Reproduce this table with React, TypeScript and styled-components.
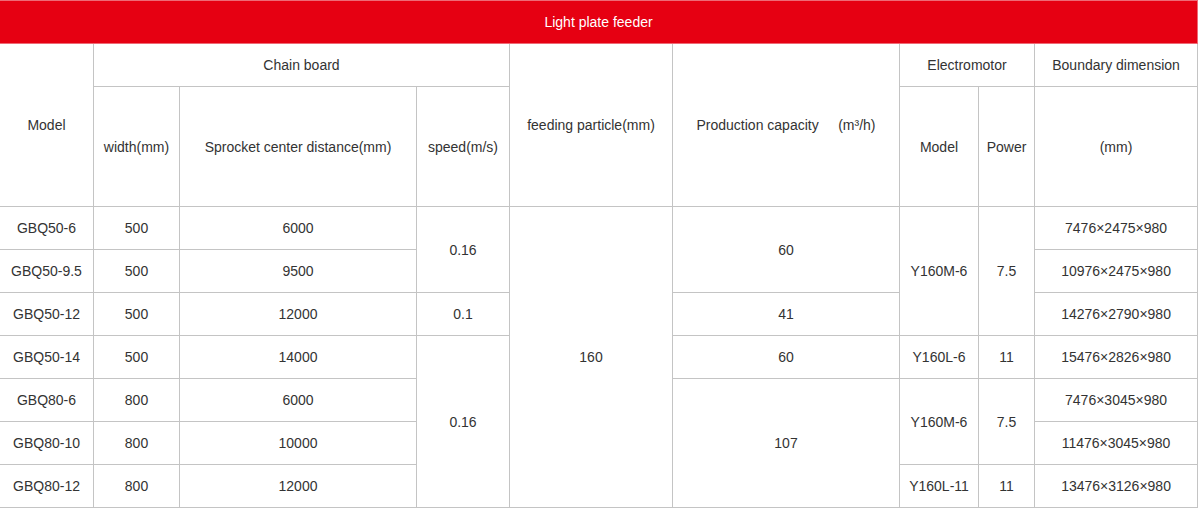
import React from 'react';
import styled, { createGlobalStyle } from 'styled-components';

const GlobalStyle = createGlobalStyle`
  html, body {
    margin: 0;
    padding: 0;
    background: #ffffff;
  }
  body {
    font-family: "Liberation Sans", Arial, sans-serif;
  }
`

const Frame = styled.div`
  width: 1199px;
  height: 509px;
  overflow: hidden;
`

const Table = styled.table`
  margin-left: -1px;
  width: 1198px;
  border-collapse: collapse;
  table-layout: fixed;
  font-size: 14px;
  color: #333333;
`

const TitleCell = styled.td`
  height: 42px;
  padding: 0;
  background: #e60012;
  color: #ffffff;
  text-align: center;
  border: 1px solid #ee6a76;
`

const Cell = styled.td`
  padding: 0;
  text-align: center;
  vertical-align: middle;
  border: 1px solid #c4c4c4;
  white-space: nowrap;
`

const Row = styled.tr<{ $h: number }>`
  height: ${p => p.$h}px;
`

const widths = [94, 86, 237, 93, 163, 227, 79, 56, 163]

const gap = '\u00a0\u00a0\u00a0\u00a0\u00a0'

const App: React.FC = () => {
  return (
    <Frame>
      <GlobalStyle />
      <Table>
        <colgroup>
          { widths.map((w, i) => <col key={ i } style={{ width: w }} />) }
        </colgroup>
        <tbody>
          <Row $h={ 42 }>
            <TitleCell colSpan={ 9 }>Light plate feeder</TitleCell>
          </Row>
          <Row $h={ 43 }>
            <Cell rowSpan={ 2 }>Model</Cell>
            <Cell colSpan={ 3 }>Chain board</Cell>
            <Cell rowSpan={ 2 }>feeding particle(mm)</Cell>
            <Cell rowSpan={ 2 }>Production capacity{ gap }(m³/h)</Cell>
            <Cell colSpan={ 2 }>Electromotor</Cell>
            <Cell>Boundary dimension</Cell>
          </Row>
          <Row $h={ 120 }>
            <Cell>width(mm)</Cell>
            <Cell>Sprocket center distance(mm)</Cell>
            <Cell>speed(m/s)</Cell>
            <Cell>Model</Cell>
            <Cell>Power</Cell>
            <Cell>(mm)</Cell>
          </Row>
          <Row $h={ 43 }>
            <Cell>GBQ50-6</Cell>
            <Cell>500</Cell>
            <Cell>6000</Cell>
            <Cell rowSpan={ 2 }>0.16</Cell>
            <Cell rowSpan={ 7 }>160</Cell>
            <Cell rowSpan={ 2 }>60</Cell>
            <Cell rowSpan={ 3 }>Y160M-6</Cell>
            <Cell rowSpan={ 3 }>7.5</Cell>
            <Cell>7476×2475×980</Cell>
          </Row>
          <Row $h={ 43 }>
            <Cell>GBQ50-9.5</Cell>
            <Cell>500</Cell>
            <Cell>9500</Cell>
            <Cell>10976×2475×980</Cell>
          </Row>
          <Row $h={ 43 }>
            <Cell>GBQ50-12</Cell>
            <Cell>500</Cell>
            <Cell>12000</Cell>
            <Cell>0.1</Cell>
            <Cell>41</Cell>
            <Cell>14276×2790×980</Cell>
          </Row>
          <Row $h={ 43 }>
            <Cell>GBQ50-14</Cell>
            <Cell>500</Cell>
            <Cell>14000</Cell>
            <Cell rowSpan={ 4 }>0.16</Cell>
            <Cell>60</Cell>
            <Cell>Y160L-6</Cell>
            <Cell>11</Cell>
            <Cell>15476×2826×980</Cell>
          </Row>
          <Row $h={ 43 }>
            <Cell>GBQ80-6</Cell>
            <Cell>800</Cell>
            <Cell>6000</Cell>
            <Cell rowSpan={ 3 }>107</Cell>
            <Cell rowSpan={ 2 }>Y160M-6</Cell>
            <Cell rowSpan={ 2 }>7.5</Cell>
            <Cell>7476×3045×980</Cell>
          </Row>
          <Row $h={ 43 }>
            <Cell>GBQ80-10</Cell>
            <Cell>800</Cell>
            <Cell>10000</Cell>
            <Cell>11476×3045×980</Cell>
          </Row>
          <Row $h={ 43 }>
            <Cell>GBQ80-12</Cell>
            <Cell>800</Cell>
            <Cell>12000</Cell>
            <Cell>Y160L-11</Cell>
            <Cell>11</Cell>
            <Cell>13476×3126×980</Cell>
          </Row>
        </tbody>
      </Table>
    </Frame>
  )
}

export default App;
